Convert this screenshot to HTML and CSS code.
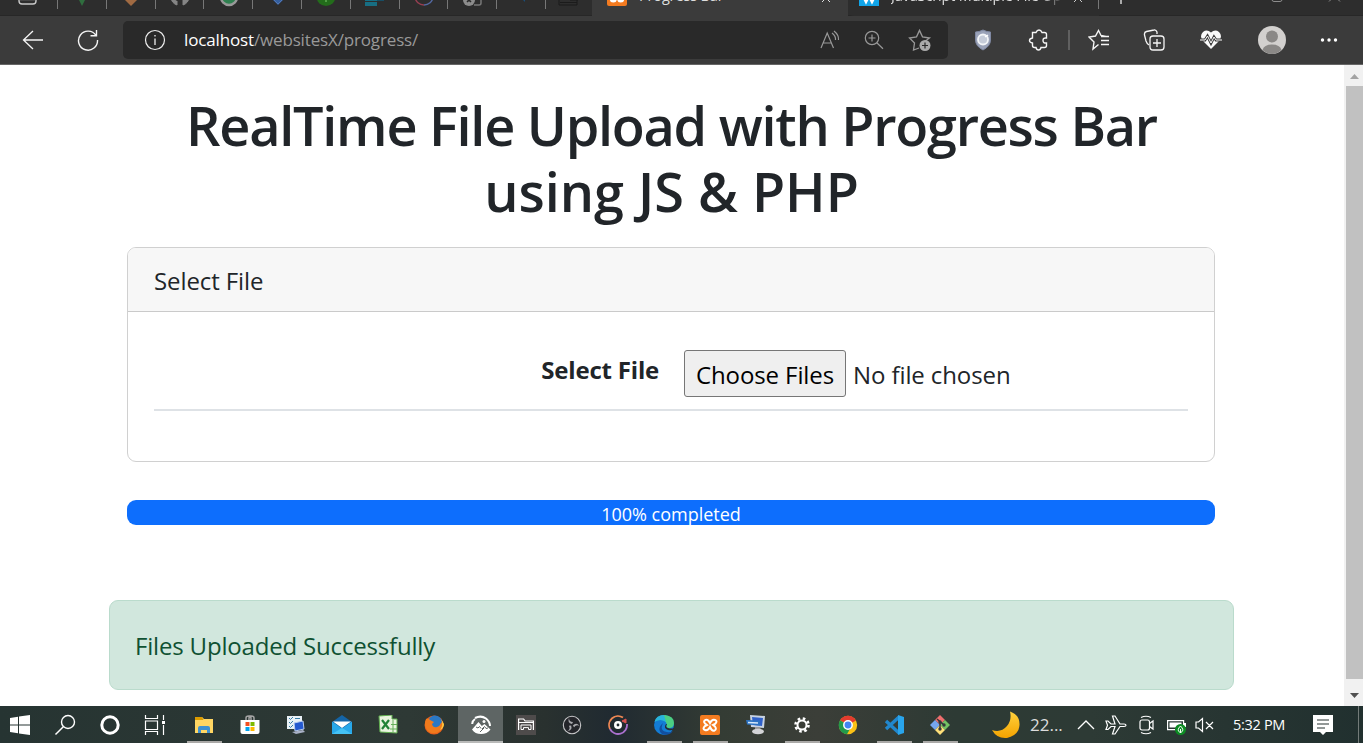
FILE: index.html
```
<!DOCTYPE html>
<html lang="en">
<head>
<meta charset="utf-8">
<title>Progress Bar</title>
<link rel="stylesheet" href="styles.css">
</head>
<body>
<div class="screen">
  <div class="tabs">
    <div class="tab menu"><svg width="20" height="16"><rect x="1" y="-13" width="17" height="17" rx="3" fill="none" stroke="#c8c8c8" stroke-width="1.4"/><path d="M5.500 -3v3M1 -.3h17" stroke="#aaa"/></svg></div>
    <div class="tab"><svg width="20" height="16"><path d="M6 -2h8l-4 8z" fill="#2f6d3e"/></svg></div>
    <div class="tab"><svg width="20" height="16"><path d="M1 -3h18l-9 9z" fill="#a06a42"/></svg></div>
    <div class="tab"><svg width="20" height="16"><path d="M1 -3a9 9 0 0 0 6 8v-4M19 -3a9 9 0 0 1-6 8v-5M3 1l4 1" fill="#858585" stroke="#858585"/></svg></div>
    <div class="tab"><svg width="20" height="16"><circle cx="10" cy="-3" r="8" fill="#2f8050" stroke="#999" stroke-width="2.500"/></svg></div>
    <div class="tab"><svg width="20" height="16"><path d="M2 -3h16l-8 8z" fill="#345f9f"/><path d="M6 0l4 4 4-4" fill="none" stroke="#5277b5"/></svg></div>
    <div class="tab"><svg width="20" height="16"><circle cx="10" cy="-3.500" r="9.500" fill="#236c1b"/><path d="M10 -4v6" stroke="#4f9c45" stroke-width="2"/></svg></div>
    <div class="tab"><svg width="20" height="16"><path d="M0 0h12" stroke="#176e83" stroke-width="2"/><path d="M0 4h12" stroke="#176e83" stroke-width="4"/><path d="M12 0h7" stroke="#174d63" stroke-width="2"/></svg></div>
    <div class="tab"><svg width="20" height="16"><path d="M1 -3a9 9 0 0 0 9 8" fill="none" stroke="#963f52" stroke-width="1.500"/><path d="M10 5a9 9 0 0 0 9-8" fill="none" stroke="#5368a0" stroke-width="1.500"/></svg></div>
    <div class="tab"><svg width="20" height="16"><circle cx="6" cy="0" r="6" fill="#8c8c8c"/><path d="M4 -2l4 4m0-4l-4 4" stroke="#292929" stroke-width="1.500"/><path d="M11 5h5q2 0 2-2v-6" fill="none" stroke="#777" stroke-width="1.500"/></svg></div>
    <div class="tab"><svg width="20" height="16"><path d="M9 -2l4 4v-4z" fill="#1b4d76"/></svg></div>
    <div class="tab dim"><svg width="22" height="16"><path d="M1 -3v8h18v-8M12 0h8M2 2.500h17" fill="none" stroke="#1b1b1b" stroke-width="1"/></svg></div>
    <div class="tab active"><svg width="20" height="16"><rect y="-14" width="20" height="20" rx="2" fill="#f47b20"/><circle cx="6.300" cy="-1" r="3.500" fill="#fff"/><circle cx="13.700" cy="-1" r="3.500" fill="#fff"/></svg><span class="tabtext">Progress Bar</span><svg class="close" width="12" height="16"><path d="M2 2L11 -7M10 2L1 -7" stroke="#ddd"/></svg></div>
    <div class="tab other"><svg width="20" height="16"><rect y="-14" width="20" height="20" fill="#10a4e8"/><path d="M4 -4l3 6 3-6 3 6 3-6" fill="none" stroke="#fff" stroke-width="2.500"/></svg><span class="tabtext">JavaScript Multiple File Up</span><svg class="close" width="12" height="16"><path d="M2 2L11 -7M10 2L1 -7" stroke="#ccc"/></svg></div>
    <div class="newtab"></div>
    <svg class="controls" width="100" height="16"><rect x="8" y="-8" width="10" height="9.500" rx="2" fill="none" stroke="#8d8d8d"/><path d="M65 1.500l11-11M76 1.500l-11-11" stroke="#8d8d8d"/></svg>
  </div>
  <div class="toolbar">
    <svg class="back" width="22" height="22"><path d="M21 11H1.500M11 2L1.500 11l9.500 9" fill="none" stroke="#f5f5f5" stroke-width="1.300"/></svg>
    <svg class="reload" width="22" height="22"><path d="M19 6.500A9.500 9.500 0 1 0 20.500 11M19.500 1v5.700h-6" fill="none" stroke="#f5f5f5" stroke-width="1.400"/></svg>
    <div class="address">
      <svg class="info" width="22" height="22"><circle cx="11" cy="11" r="9.500" fill="none" stroke="#eee" stroke-width="1.200"/><path d="M11 9.500v6.500M11 6v1.500" stroke="#eee" stroke-width="1.300"/></svg>
      <span class="url"><b>localhost</b>/websitesX/progress/</span>
      <svg class="read" width="22" height="22" viewBox="0 0 22 22"><path d="M2 19L8.200 4l6.300 15M4.200 14h8M13 4q4 3 3.500 7M15 2q5 4 4.500 9" fill="none" stroke="#999" stroke-width="1.200"/></svg>
      <svg class="lens" width="22" height="22"><path d="M9 5.500v7M5.500 9h7M13.800 13.800l6.200 6" stroke="#999" stroke-width="1.200"/><circle cx="9" cy="9" r="6.700" fill="none" stroke="#999" stroke-width="1.200"/></svg>
      <svg class="addfav" width="24" height="24"><path d="M11 20l-5.500 2 1-7-5-5 7-1.200 3-6.400 3 6.400 7 1.200-4 3" fill="none" stroke="#999" stroke-width="1.300"/><circle cx="17" cy="17.500" r="5.500" fill="#aaa"/><path d="M17 14.500v6M14 17.500h6" stroke="#292929" stroke-width="1.200"/></svg>
    </div>
    <div class="cell shield"><svg width="18" height="22"><path d="M9 1q4 2 7.500 2v8q0 6-7.500 10Q1.500 17 1.500 11V3Q5 3 9 1z" fill="#9aa2b8" stroke="#8089a3"/><circle cx="9" cy="10.500" r="5" fill="#c6ccd9" stroke="#f3f5f8" stroke-width="1.800"/><path d="M11 8l3-2" fill="none" stroke="#fff" stroke-width="1.500"/></svg></div>
    <div class="cell puzzle"><svg width="22" height="22"><path d="M4.500 3.500H8Q9 1 11 1t3 2.500h2.500q2 0 2 2V9Q15 8.500 15 11.500t3.500 2.500v2.500q0 2-2 2H13Q12.500 21 10.500 21T8 18.500H6.500q-2 0-2-2V14Q1.500 13.500 1.500 11.500T4.500 9z" fill="none" stroke="#f5f5f5" stroke-width="1.400"/></svg></div>
    <div class="separator"></div>
    <div class="cell fav"><svg width="22" height="22"><path d="M10.500 15.500L5 20l1-7-5-5 6.500-1L10.500 1.500l2.500 5 5 1M13 7.500h8M13 11.500h8M13 15.500h8" fill="none" stroke="#f5f5f5" stroke-width="1.400"/></svg></div>
    <div class="cell coll"><svg width="22" height="22"><path d="M6 16q-2-1-3-4L1.500 6q-.5-3 2-3.500L11 1q2-.5 3 2v2" fill="none" stroke="#f5f5f5" stroke-width="1.300"/><rect x="7" y="7" width="14" height="14" rx="3" fill="none" stroke="#f5f5f5" stroke-width="1.300"/><path d="M14 10v8M10 14h8" stroke="#f5f5f5" stroke-width="1.300"/></svg></div>
    <div class="cell heart"><svg width="22" height="22"><path d="M11 20L3 12Q-1 7 3 3q4-3 8 .5Q15 0 19 3q4 4 0 9z" fill="#fafafa"/><path d="M0 11h5l2.500-4 3.500 7 3-6 2 3h6" fill="none" stroke="#3b3b3b" stroke-width="2.800"/><path d="M0 11h5l2.500-4 3.500 7 3-6 2 3h6" fill="none" stroke="#fff" stroke-width="1"/></svg></div>
    <div class="cell person"><svg width="28" height="28"><circle cx="14" cy="14" r="14" fill="#d2d0ce"/><circle cx="14" cy="10.500" r="6" fill="#8a8886"/><path d="M4.500 24Q6 18.500 14 18.500T23.500 24Q19 28 14 28T4.500 24z" fill="#8a8886"/></svg></div>
    <div class="cell more"><svg width="18" height="6"><circle cx="2.500" cy="3" r="1.700" fill="#fff"/><circle cx="9" cy="3" r="1.700" fill="#fff"/><circle cx="15.500" cy="3" r="1.700" fill="#fff"/></svg></div>
  </div>
  <div class="viewport">
    <main class="page">
      <h1><span class="h1a">RealTime File Upload with Progress Bar</span><br><span class="h1b">using JS &amp; PHP</span></h1>
      <section class="card">
        <div class="cardhead"><span>Select File</span></div>
        <div class="row">
          <strong>Select File</strong>
          <div class="picker"><button>Choose Files</button><span>No file chosen</span></div>
        </div>
      </section>
      <div class="progress"><span>100% completed</span></div>
      <div class="alert"><span>Files Uploaded Successfully</span></div>
    </main>
    <div class="scroll"><svg width="19" height="21"><path d="M6 14h9l-4.500-5z" fill="#a3a3a3"/></svg><div class="thumb"></div><svg width="19" height="27"><path d="M6 14h9l-4.500 5z" fill="#505050"/></svg></div>
  </div>
  <div class="taskbar">
    <div class="task start"><svg width="20" height="20"><path d="M0 3l8-1.200V9.500H0zM9 1.600L20 0v9.500H9zM0 10.500h8v7.700L0 17zM9 10.500h11V20L9 18.400z" fill="#fff"/></svg></div>
    <div class="task small"><svg width="22" height="22"><circle cx="14" cy="8" r="6.500" fill="none" stroke="#fff" stroke-width="1.400"/><path d="M9.300 12.700L1.500 20.500" stroke="#fff" stroke-width="1.500"/></svg></div>
    <div class="task small"><svg width="20" height="20"><circle cx="10" cy="10" r="8.200" fill="none" stroke="#fff" stroke-width="3"/></svg></div>
    <div class="task small"><svg width="22" height="20"><path d="M1.500 0v3.500h12V0M1.500 20v-3.500h12V20M1.500 6h12v8.500h-12zM19.500 0v5M19.500 10v10" fill="none" stroke="#fff" stroke-width="1.200"/><path d="M18 6h3v3h-3z" fill="#fff"/></svg></div>
    <div class="task firstapp run"><svg width="20" height="20"><path d="M1 2h7l2 2h9v14H1z" fill="#ffd663"/><path d="M1 2h7l1.500 3H1z" fill="#dc9c00"/><path d="M4 18v-5q0-2 2-2h8q2 0 2 2v5h-3v-3H7v3z" fill="#3e91d2"/></svg></div>
    <div class="task"><svg width="20" height="20"><path d="M6 6V3q0-2 2.500-2T11 3v3M9 6V3q0-2 2.500-2T14 3v3" fill="none" stroke="#a2a2a2" stroke-width="1.500"/><path d="M.5 5h19v12q0 2-2 2h-15q-2 0-2-2z" fill="#fff"/><path d="M5.500 7h4v4h-4z" fill="#f25022"/><path d="M10.500 7h4v4h-4z" fill="#7fba00"/><path d="M5.500 12h4v4h-4z" fill="#00a4ef"/><path d="M10.500 12h4v4h-4z" fill="#ffb900"/></svg></div>
    <div class="task"><svg width="20" height="20"><path d="M1 1h15v13H1z" fill="#e9f1f6"/><path d="M3 3l1.500 1.500L7 2M3 7l1.500 1.500L7 6M3 11l1.500 1.500L7 10M9 3.500h5" fill="none" stroke="#397ca5"/><path d="M8 8l9-2 1 8-9 2z" fill="#2459cf" stroke="#b9cdf0"/><path d="M6 17l11-2 2 2-9 2z" fill="#a9b1c6"/></svg></div>
    <div class="task"><svg width="20" height="20"><path d="M0 7l10-7 10 7-10 7z" fill="#1464a5"/><path d="M1 6.500h18L10 13z" fill="#fff"/><path d="M0 6.500l10 7 10-7V19H0z" fill="#28a8ea"/><path d="M0 19l10-6 10 6z" fill="#45c2f5"/></svg></div>
    <div class="task"><svg width="20" height="20"><path d="M1 1l13-1v4h5v14l-17-1z" fill="#e9f4df" stroke="#5fae4e"/><path d="M4 5l7 9M11 5L4 14" stroke="#218336" stroke-width="2.200"/><path d="M15 5v12M12 14h7M13 9.500h6" stroke="#65af58"/></svg></div>
    <div class="task"><svg width="20" height="20"><circle cx="10" cy="10" r="9.500" fill="#e9601a"/><circle cx="11" cy="7.500" r="7" fill="#2a78c5"/><path d="M2 4q3-1 4 1l4 2-2 2q1 4 5 3 3-1 4-4l2-2q1 7-3 10-5 4-11 1-6-5-3-13z" fill="#f07a1c"/><path d="M17 4q3 6-1 11 4-2 4-6z" fill="#ffc93f"/></svg></div>
    <div class="task selected"><svg width="20" height="20"><path d="M1.200 9Q1.500 5.500 4 4M4 3Q10 0 15 3.500 19 7 19 11" fill="none" stroke="#fff" stroke-width="2"/><path d="M1 14.500L7.500 7l3.300 4 2.700-2 6 5.500Q16 19 10 19T1 14.500z" fill="#fff"/><path d="M5 12l2 1 1.500-1.500 1.500 2M11 14l2.500-2.500 1.500 2 2-.5M9 17l4-4" fill="none" stroke="#5e6564"/><circle cx="13" cy="6.500" r="1.500" fill="#fff"/></svg></div>
    <div class="task"><svg width="20" height="20"><path d="M0 0h20v20H0z" fill="#4e4b4b"/><path d="M2.600 15V4h5l1.500 2h8.300v9M3 7.500h14" fill="none" stroke="#fff" stroke-width="1.200"/><path d="M5 14.500V10h10v4.500h-2.500V12.600h-5v1.900z" fill="none" stroke="#fff" stroke-width="1"/></svg></div>
    <div class="task"><svg width="20" height="20"><circle cx="10" cy="10" r="8.700" fill="#24252a" stroke="#c6c6c8" stroke-width="1.100"/><g fill="#a9a9ad"><path d="M10 9Q5 8 7 3q0 4 4 4z"/><path d="M10 9Q5 8 7 3q0 4 4 4z" transform="rotate(120 10 10)"/><path d="M10 9Q5 8 7 3q0 4 4 4z" transform="rotate(240 10 10)"/></g></svg></div>
    <div class="task"><svg width="20" height="20"><path d="M15 2.500A9 9 0 0 0 2 14" fill="none" stroke="#ef8854" stroke-width="1.800"/><path d="M2 14A9 9 0 0 0 19 9" fill="none" stroke="#aa70ce" stroke-width="1.800"/><path d="M14 6l4-2v4z" fill="#d9534e" stroke="#d9534e"/><circle cx="10" cy="10" r="2.700" fill="none" stroke="#fff" stroke-width="2.600"/></svg></div>
    <div class="task run"><svg width="20" height="20"><circle cx="10" cy="10" r="10" fill="#137cd5"/><path d="M1 6Q4 0 11 0q9 1 9 8 0 5-5 5-4 0-2-3-1-5-6-5Q3 5 1 6z" fill="#4bcf83"/><path d="M.5 7Q2 0 10 0l2 7Q6 3 .5 7z" fill="#28b3dc"/><path d="M9 8q-4 8 4 9 3 1 6-1-4 5-10 3.500-5-3-3-8 1-2 3-3.500z" fill="#124f9f"/><path d="M12 9q-3 4 2 6 4 1 6-1v-1q-3 1-6 0-3-1-1-4z" fill="#252d34"/></svg></div>
    <div class="task run"><svg width="20" height="20"><rect width="20" height="20" rx="2" fill="#f47b20"/><path d="M7 10L5 8.500Q3 6 5.500 5T10 8q2-4 5-3t0 4l-2 1 2 1.500q2 3-.5 4T10 12q-2 4-5 3t0-4z" fill="none" stroke="#fff" stroke-width="2"/></svg></div>
    <div class="task"><svg width="20" height="20"><path d="M4 0l15 1-1 12-13-1z" fill="#c7d2e1"/><path d="M6 2l11 1-1 8-9-1z" fill="#3061c9"/><path d="M0 5l14 .5v5L1 9.500z" fill="#2c73c3"/><path d="M2 7.500l10 .5" stroke="#d5e9fa" stroke-width="1.600"/><path d="M9 12h5l1 3H9z" fill="#999"/><ellipse cx="12" cy="16.500" rx="6" ry="2.800" fill="#d3d4d7"/></svg></div>
    <div class="task run"><svg width="20" height="20"><circle cx="10" cy="10" r="4.500" fill="none" stroke="#fff" stroke-width="2"/><circle cx="10" cy="10" r="6.500" fill="none" stroke="#fff" stroke-width="2.600" stroke-dasharray="2.552 2.552"/></svg></div>
    <div class="task"><svg width="20" height="20"><circle cx="10" cy="10" r="9.200" fill="#fbc116"/><path d="M10 10L2 5.300A9.200 9.200 0 0 1 18 5.500z" fill="#e33b2e"/><path d="M10 10L2 5.300A9.200 9.200 0 0 0 9 19.200L13 12z" fill="#229a4b"/><circle cx="10" cy="10" r="4.200" fill="#4285f4" stroke="#fff" stroke-width="1.500"/></svg></div>
    <div class="task run"><svg width="20" height="20"><path d="M15 2L2 14M15 18L2 6" stroke="#2187cd" stroke-width="3.400"/><path d="M14 0l6 2v16l-6 2z" fill="#29a5ec"/></svg></div>
    <div class="task run"><svg width="20" height="20"><path d="M10 0l5 5-5 5-5-5z" fill="#ef6e6e"/><path d="M15 5l5 5-5 5-5-5z" fill="#74c264"/><path d="M5 5l5 5-5 5-5-5z" fill="#75a6ed"/><path d="M10 10l5 5-5 5-5-5z" fill="#ffe079"/><path d="M7 4l7 6M10 6v9" stroke="#34383a" stroke-width="1.500"/><circle cx="10" cy="7" r="1.700" fill="#34383a"/><circle cx="14" cy="10" r="1.700" fill="#34383a"/><circle cx="10" cy="14" r="1.700" fill="#34383a"/></svg></div>
    <svg class="moon" width="28" height="28"><defs><linearGradient id="mg" x2="0" y2="1"><stop stop-color="#ffd13d"/><stop offset="1" stop-color="#f4a300"/></linearGradient></defs><path d="M18 .5Q28 4 27.500 14T15 27Q5 28 0 19q9 3 15-4 5-6 3-14.500z" fill="url(#mg)"/></svg>
    <span class="temp">22...</span>
    <svg class="chev" width="18" height="10"><path d="M1 9l8-8 8 8" fill="none" stroke="#fff" stroke-width="1.300"/></svg>
    <svg class="plane" width="22" height="20"><path d="M1 6h2l3 3h4L7.500 1H10l5 8h4q2 0 2 1.200T19 11.500h-4L10 19H7.500L10 11.500H6l-3 3H1l1.500-4.300z" fill="none" stroke="#fff" stroke-width="1.200"/></svg>
    <svg class="cam" width="16" height="20"><path d="M2 2.500Q7 0 12 2.500M2 17.500Q7 20 12 17.500M10.500 8.500L14 6v8l-3.500-2.500" fill="none" stroke="#fff" stroke-width="1.200"/><rect x="1" y="5" width="9.500" height="10" rx="2" fill="none" stroke="#fff" stroke-width="1.200"/></svg>
    <svg class="battery" width="20" height="20"><path d="M.6 5.600h16v9H.6z" fill="none" stroke="#fff" stroke-width="1.200"/><path d="M2.500 7.500h12v5h-12zM17 8h2v4h-2z" fill="#fff"/><circle cx="13.500" cy="14.500" r="5.500" fill="#0c8b23"/><path d="M13.500 11q-4 4-1 6l1 1 1-1q3-2-1-6zM13.500 14v4" fill="none" stroke="#fff"/></svg>
    <svg class="volume" width="20" height="16"><path d="M1 5h2.500l4-3.500v13L3.500 11H1zM11 5l7 7M18 5l-7 7" fill="none" stroke="#fff" stroke-width="1.200"/></svg>
    <span class="clock">5:32 PM</span>
    <svg class="notice" width="20" height="20"><path d="M0 0h20v17h-7l-3 3-3-3H0z" fill="#fff"/><path d="M4 5h12M4 9h12M4 13h8" stroke="#273331" stroke-width="1.200"/></svg>
    <div class="desktop"></div>
  </div>
</div>
</body>
</html>
```

FILE: styles.css
```
* { box-sizing: border-box; }
body { margin: 0; overflow: hidden; font-family: "Open Sans", "Noto Sans", sans-serif; }
svg { display: block; flex: none; }
.screen { width: 1363px; height: 743px; display: grid; grid-template-rows: 16px 49px 641px 37px; background: #fff; }

.tabs { display: flex; background: #2d2d2d; overflow: hidden; box-shadow: inset 0 -1px #272727; }
.tab { width: 48.800px; flex: none; display: flex; justify-content: center; background: linear-gradient(#777, #777) right 0 top 0 / 1px 9px no-repeat; }
.tab.menu { width: 58px; padding-right: 2px; }
.tab.dim { width: 46px; background: none; }
.tab.active { width: 256px; background: #3b3b3b; justify-content: flex-start; padding-left: 15px; }
.tab.other { width: 251px; justify-content: flex-start; padding-left: 11px; background-color: #2d2d2d; border-bottom-left-radius: 6px; }
.tabtext { font-size: 14.500px; line-height: 20px; color: #ddd; margin: -14px 0 0 12px; white-space: nowrap; letter-spacing: -.15px; }
.tab.other .tabtext { width: 172px; overflow: hidden; -webkit-mask-image: linear-gradient(90deg, #000 88%, transparent); mask-image: linear-gradient(90deg, #000 88%, transparent); }
.active .close { margin-left: auto; margin-right: 16px; }
.other .close { margin-left: 9px; }
.newtab { width: 2px; height: 4px; background: #aaa; margin-left: 21px; flex: none; }
.controls { margin-left: 142px; }

.toolbar { background: #3b3b3b; border-bottom: 1px solid #666; display: flex; align-items: center; }
.back { margin-left: 22px; }
.reload { margin-left: 33px; }
.address { width: 825px; height: 38px; margin-left: 24px; border-radius: 5px; background: #292929; display: flex; align-items: center; flex: none; }
.info { margin-left: 21px; }
.url { margin-left: 18px; width: 630px; font-size: 17px; line-height: 36px; color: #999; letter-spacing: -.15px; }
.url b { font-weight: 400; color: #fff; }
.read { margin-left: 5px; }
.lens { margin-left: 22px; }
.addfav { margin-left: 23px; }
.cell { display: flex; justify-content: center; flex: none; }
.shield { width: 56px; margin-left: 7px; }
.puzzle { width: 55px; }
.separator { width: 2px; height: 20px; margin-left: 2px; background: #606060; }
.fav { width: 58px; }
.coll { width: 51px; }
.heart { width: 64px; }
.person { width: 58px; }
.more { width: 56px; }

.viewport { display: grid; grid-template-columns: 1344px 19px; overflow: hidden; }
.page { padding: 27px 110px 0 109px; color: #212529; font-size: 24px; }
h1 { margin: 0 18px; font-size: 54px; line-height: 66px; font-weight: 600; text-align: center; white-space: nowrap; }
.h1a { letter-spacing: -1.250px; }
.card { margin: 23px 19px 0 18px; height: 215px; border: 1px solid #d0d0d0; border-radius: 9px; letter-spacing: -.1px; }
.cardhead { height: 64px; padding: 0 26px; line-height: 66px; background: #f7f7f7; border-bottom: 1px solid #cacaca; border-radius: 8px 8px 0 0; }
.row { margin: 26px 26px 0; height: 73px; border-bottom: 2px solid #dee2e6; display: flex; }
.row strong { width: 505px; margin-top: 15px; line-height: 34px; text-align: right; letter-spacing: -.2px; }
.picker { margin-left: 25px; padding-top: 12px; display: flex; line-height: 50px; }
button { width: 162px; height: 47px; padding: 0; margin: 0 7px 0 0; border: 1px solid #767676; border-radius: 3px; background: #efefef; color: #000; font: inherit; line-height: 48px; letter-spacing: inherit; white-space: nowrap; }
.progress { height: 25px; margin: 38px 19px 0 18px; border-radius: 9px; background: #0d6efd; color: #fff; font-size: 18px; line-height: 28px; text-align: center; overflow: hidden; }
.alert { height: 90px; margin-top: 75px; border: 1px solid #badbcc; border-radius: 9px; background: #d1e7dd; color: #0f5132; line-height: 90px; padding-left: 25px; letter-spacing: -.180px; }
.scroll { background: #f1f1f1; display: flex; flex-direction: column; }
.thumb { width: 17px; margin-left: 2px; flex: 1; background: #c1c1c1; }

.taskbar { display: flex; align-items: center; background: linear-gradient(90deg, #263432, #2e3935 30%, #29312f 40%, #202a31 45%, #343c34 53%, #3b3e38 60%, #2d3a34 70%, #2d3a35 80%, #21302f); color: #fff; }
.task { width: 46px; height: 37px; display: flex; align-items: center; justify-content: center; flex: none; }
.task.start { width: 40px; margin-right: 2.500px; }
.task.small { width: 45px; }
.task.firstapp { margin-left: 3.500px; }
.task.run { background: linear-gradient(#aaa9a7, #aaa9a7) center bottom / 35px 2px no-repeat; }
.task.selected { border-left: 1px solid transparent; background: linear-gradient(#b9bab9, #b9bab9) center bottom / 100% 2px no-repeat padding-box, #5e6564 padding-box; }
.moon { margin-left: 29px; }
.temp { width: 57px; padding-left: 10px; font-size: 17px; color: #ddd; flex: none; }
.chev { margin-left: 0; }
.plane { margin-left: 10px; }
.cam { margin-left: 12px; }
.battery { margin-left: 12px; }
.volume { margin-left: 8px; }
.clock { width: 60px; margin-left: 18px; font-size: 14.500px; white-space: nowrap; letter-spacing: -.3px; }
.notice { margin-left: 20px; }
.desktop { width: 1px; height: 37px; background: #737b79; margin-left: 25px; }
```
